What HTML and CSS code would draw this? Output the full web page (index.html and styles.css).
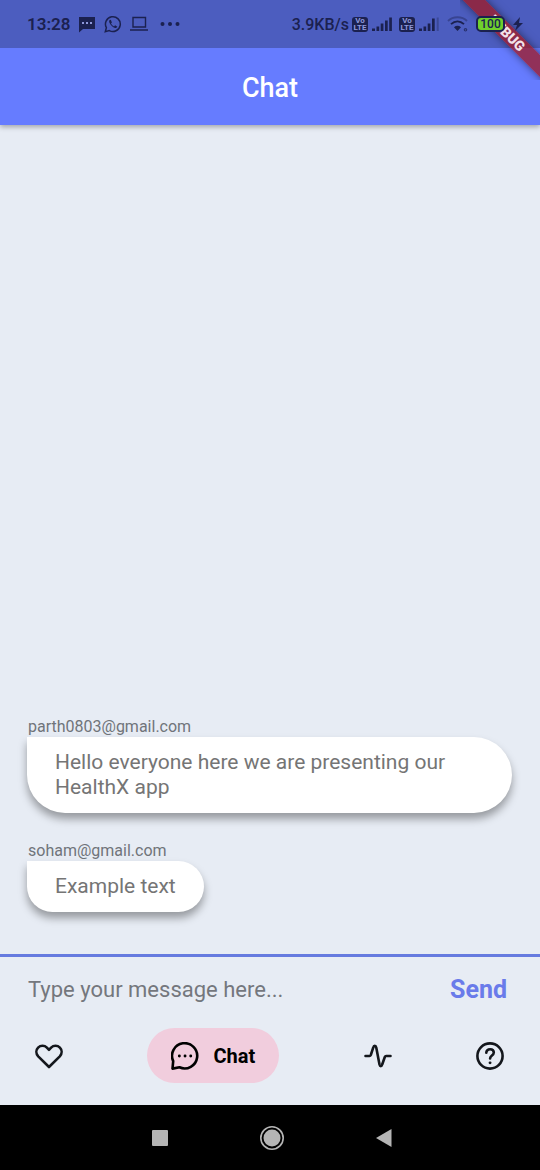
FILE: index.html
```html
<!DOCTYPE html>
<html lang="en">
<head>
<meta charset="utf-8">
<meta name="viewport" content="width=device-width, initial-scale=1">
<title>Chat</title>
<link rel="stylesheet" href="styles.css">
</head>
<body>
<div class="screen">
  <header class="top">
    <div class="status">
      <div class="debug-clip"><span class="debug-banner">DEBUG</span></div>
      <div class="status-left">
        <span class="clock">13:28</span>
        <svg width="18" height="18" viewBox="0 0 18 18"><path d="M1 2h16v12H5l-4 3.500z" fill="#1b2150"/><path d="M4 7h2v2H4zM8 7h2v2H8zM12 7h2v2h-2z" fill="#8e98da"/></svg>
        <svg width="18" height="18" viewBox="0 0 18 18" fill="none" stroke="#1b2150" stroke-width="1.500"><path d="M1.300 16.700l1.100-4A7.400 7.400 0 1 1 5.300 15.600z"/><path d="M6 4.700c-1 .7-1.100 1.900-.4 3.300 1.100 2.200 2.700 3.800 4.900 4.700 1.400.6 2.400.2 2.900-.9l-2.300-1.500-1.100 1.100c-1.300-.6-2.400-1.700-3-2.900l.9-1.100-1-2.500z" fill="#1b2150" stroke="none"/></svg>
        <svg width="18" height="18" viewBox="0 0 18 18" fill="none" stroke="#1b2150" stroke-width="1.400"><path d="M3 2.500h12.500v9.500H3zM0 15h18"/></svg>
        <svg class="more" width="20" height="18" viewBox="0 0 20 18" fill="#1b2150"><circle cx="2.500" cy="9" r="2"/><circle cx="10" cy="9" r="2"/><circle cx="17.500" cy="9" r="2"/></svg>
      </div>
      <div class="status-right">
        <span class="speed">3.9KB/s</span>
        <span class="volte"><span>Vo</span><span>LTE</span></span>
        <svg class="bars" width="21" height="16" viewBox="0 0 21 16" fill="#1b2150"><path d="M0 12.500h3V15H0zM4.500 10.500h2.700V15H4.500zM8.700 7.500h2.700V15H8.700zM13 4.500h2.700V15H13zM17.200 1.500h2.700v13.500h-2.700z"/></svg>
        <span class="volte"><span>Vo</span><span>LTE</span></span>
        <svg class="bars" width="21" height="16" viewBox="0 0 21 16" fill="#1b2150"><path d="M0 12.500h3V15H0zM4.500 10.500h2.700V15H4.500zM8.700 7.500h2.700V15H8.700zM13 2.500h2.700V15H13z"/><path d="M17.700 1.500h2v13.500h-2z" opacity=".35"/></svg>
        <svg class="wifi" width="22" height="18" viewBox="0 0 22 18" fill="none" stroke="#1b2150" stroke-width="1.800"><path d="M1 6c5-5 14-5 19 0" opacity=".4"/><path d="M4 9.200c4-3.700 9-3.700 13 0"/><path d="M7 12.200c2.300-1.800 4.700-1.800 7 0l-3.500 3.800z" fill="#1b2150" stroke="none"/><circle cx="18.500" cy="14.800" r="1.200" stroke-width="1.200" opacity=".7"/></svg>
        <span class="battery">100</span>
        <svg width="10" height="16" viewBox="0 0 10 16" fill="#1b2150"><path d="M7 1L0 9h4l-2 6 8-8H6z"/></svg>
      </div>
    </div>
    <h1 class="title">Chat</h1>
  </header>

  <main class="messages">
    <article class="message">
      <div class="sender">parth0803@gmail.com</div>
      <p class="bubble">Hello everyone here we are presenting our HealthX app</p>
    </article>
    <article class="message">
      <div class="sender">soham@gmail.com</div>
      <p class="bubble">Example text</p>
    </article>
  </main>

  <form class="composer">
    <input class="field" type="text" aria-label="Message" placeholder="Type your message here...">
    <button class="send" type="button">Send</button>
  </form>

  <nav class="tabs" aria-label="Sections">
    <button class="tab" type="button" aria-label="Favourites">
      <svg width="28" height="28" viewBox="0 0 28 28"><path d="M14 25L3.200 14.300C.7 11.500.9 7.800 3.100 5.600c2.500-2.500 6.300-2.500 8.800 0L14 7.800l2.100-2.200c2.500-2.500 6.300-2.500 8.800 0 2.200 2.200 2.400 5.900-.1 8.700z"/></svg>
    </button>
    <button class="tab tab-active" type="button" aria-current="page">
      <svg width="28" height="28" viewBox="0 0 28 28"><path d="M1.500 26.600l.7-7.500A12.600 12.600 0 1 1 8.500 25.300z"/><path class="dots" d="M8.300 14h.1M14 14h.1M19.700 14h.1"/></svg>
      <span>Chat</span>
    </button>
    <button class="tab" type="button" aria-label="Activity">
      <svg width="28" height="28" viewBox="0 0 28 28"><path d="M1.500 14h4c.7 0 1-.3 1.300-1l2.400-7.300c.6-2.400 2.600-2.400 3.100 0l3.200 16.800c.5 2.200 2.100 2.200 2.700 0l2.600-7.500c.3-.7.600-1 1.300-1h4.400"/></svg>
    </button>
    <button class="tab" type="button" aria-label="Help">
      <svg width="28" height="28" viewBox="0 0 28 28"><circle cx="14" cy="14" r="12.600"/><path d="M10.300 10.800c0-2.200 1.600-3.600 3.800-3.600s3.700 1.400 3.700 3.400c0 2.900-3.700 2.900-3.700 5.900"/><path class="dots" d="M14 20.800h.1"/></svg>
    </button>
  </nav>

  <footer class="system">
    <button class="key" type="button" aria-label="Recent apps"><svg width="26" height="26" viewBox="0 0 26 26"><rect x="5" y="5" width="16" height="16" rx="1"/></svg></button>
    <button class="key" type="button" aria-label="Home"><svg width="26" height="26" viewBox="0 0 26 26"><circle cx="13" cy="13" r="8.500"/><circle cx="13" cy="13" r="11.200" fill="none" stroke="#b5b5b5" stroke-width="1.600"/></svg></button>
    <button class="key" type="button" aria-label="Back"><svg width="26" height="26" viewBox="0 0 26 26"><path d="M5 13l15.500-9v18z"/></svg></button>
  </footer>
</div>
</body>
</html>
```
FILE: styles.css
```css
* { box-sizing: border-box; }

body {
  margin: 0;
  background: #e7ecf4;
  font-family: Roboto, "Liberation Sans", sans-serif;
}

button, input {
  font-family: inherit;
  border: 0;
  background: none;
  padding: 0;
  margin: 0;
}

.screen {
  display: flex;
  flex-direction: column;
  min-height: 100vh;
}

.top {
  background: #667cff;
  box-shadow: 0 2px 5px rgba(0, 0, 0, 0.3);
}

.debug-clip {
  position: absolute;
  top: 0;
  right: 0;
  width: 80px;
  height: 80px;
  overflow: hidden;
}

.debug-banner {
  position: absolute;
  top: 25px;
  right: -37px;
  width: 140px;
  line-height: 16px;
  text-align: center;
  font-size: 14px;
  font-weight: 900;
  color: #f3e3ea;
  background: rgba(160, 24, 34, 0.75);
  box-shadow: 0 0 8px rgba(0, 0, 0, 0.5);
  transform: rotate(45deg);
}

.status {
  position: relative;
  display: flex;
  align-items: center;
  justify-content: space-between;
  height: 48px;
  padding: 0 17px 0 27px;
  background: rgba(0, 0, 0, 0.25);
  color: #1b2150;
}

.status-left,
.status-right {
  display: flex;
  align-items: center;
  z-index: 1;
}

.status-left { gap: 8px; }
.more { margin-left: 4px; }
.clock { font-size: 17px; font-weight: 600; }
.speed { font-size: 16px; font-weight: 500; margin-right: 3px; }

.volte {
  display: flex;
  flex-direction: column;
  align-items: center;
  width: 16px;
  padding-bottom: 1px;
  border-radius: 3px;
  background: #1b2150;
  color: #8e98da;
  font-size: 8px;
  font-weight: 700;
  line-height: 7px;
}

.bars { margin: 0 6px 0 4px; }
.wifi { margin: 0 7px 0 1px; }

.battery {
  width: 29px;
  margin-right: 8px;
  border: 2px solid #1b2150;
  border-radius: 5px;
  background: #6fd02c;
  font-size: 12px;
  font-weight: 500;
  line-height: 12px;
  text-align: center;
}

.title {
  margin: 0;
  padding: 24px 0 20px;
  color: #fff;
  font-size: 27px;
  font-weight: 500;
  line-height: 33px;
  text-align: center;
}

.messages {
  flex: 1;
  display: flex;
  flex-direction: column;
  justify-content: flex-end;
  align-items: flex-start;
  gap: 28px;
  padding: 28px 28px 42px 27px;
}

.message {
  display: flex;
  flex-direction: column;
  align-items: flex-start;
}

.sender {
  padding-left: 1px;
  color: #70747a;
  font-size: 16px;
  line-height: 20px;
}

.bubble {
  margin: 0;
  padding: 13px 28px;
  border-radius: 0 41px 41px 41px;
  background: #fff;
  box-shadow: 0 6px 8px rgba(0, 0, 0, 0.35);
  color: #757575;
  font-size: 21px;
  line-height: 25px;
}

.composer {
  display: flex;
  align-items: center;
  padding: 0 33px 0 28px;
  border-top: 3px solid #667bdf;
}

.field {
  flex: 1;
  min-width: 0;
  height: 64px;
  outline: 0;
  font-size: 22px;
  color: #333;
}

.field::placeholder { color: #74777d; opacity: 1; }

.send {
  color: #6a7bea;
  font-size: 25px;
  font-weight: 700;
}

.tabs {
  display: flex;
  align-items: center;
  justify-content: space-between;
  padding: 7px 36px 22px 35px;
}

.tab {
  display: flex;
  align-items: center;
  gap: 14px;
  height: 55px;
  border-radius: 28px;
  color: #000;
  font-size: 20px;
  font-weight: 700;
}

.tab-active {
  padding: 0 24px;
  background: #f1cddd;
}

.tab svg {
  fill: none;
  stroke: #14171c;
  stroke-width: 2.600;
  stroke-linecap: round;
  stroke-linejoin: round;
}

.tab-active svg { stroke: #000; }
.tab .dots { stroke-width: 2.800; }

.system {
  display: flex;
  align-items: center;
  justify-content: center;
  gap: 86px;
  height: 65px;
  padding-left: 3px;
  background: #000;
}

.key { display: flex; }
.key svg { fill: #b5b5b5; }
```
